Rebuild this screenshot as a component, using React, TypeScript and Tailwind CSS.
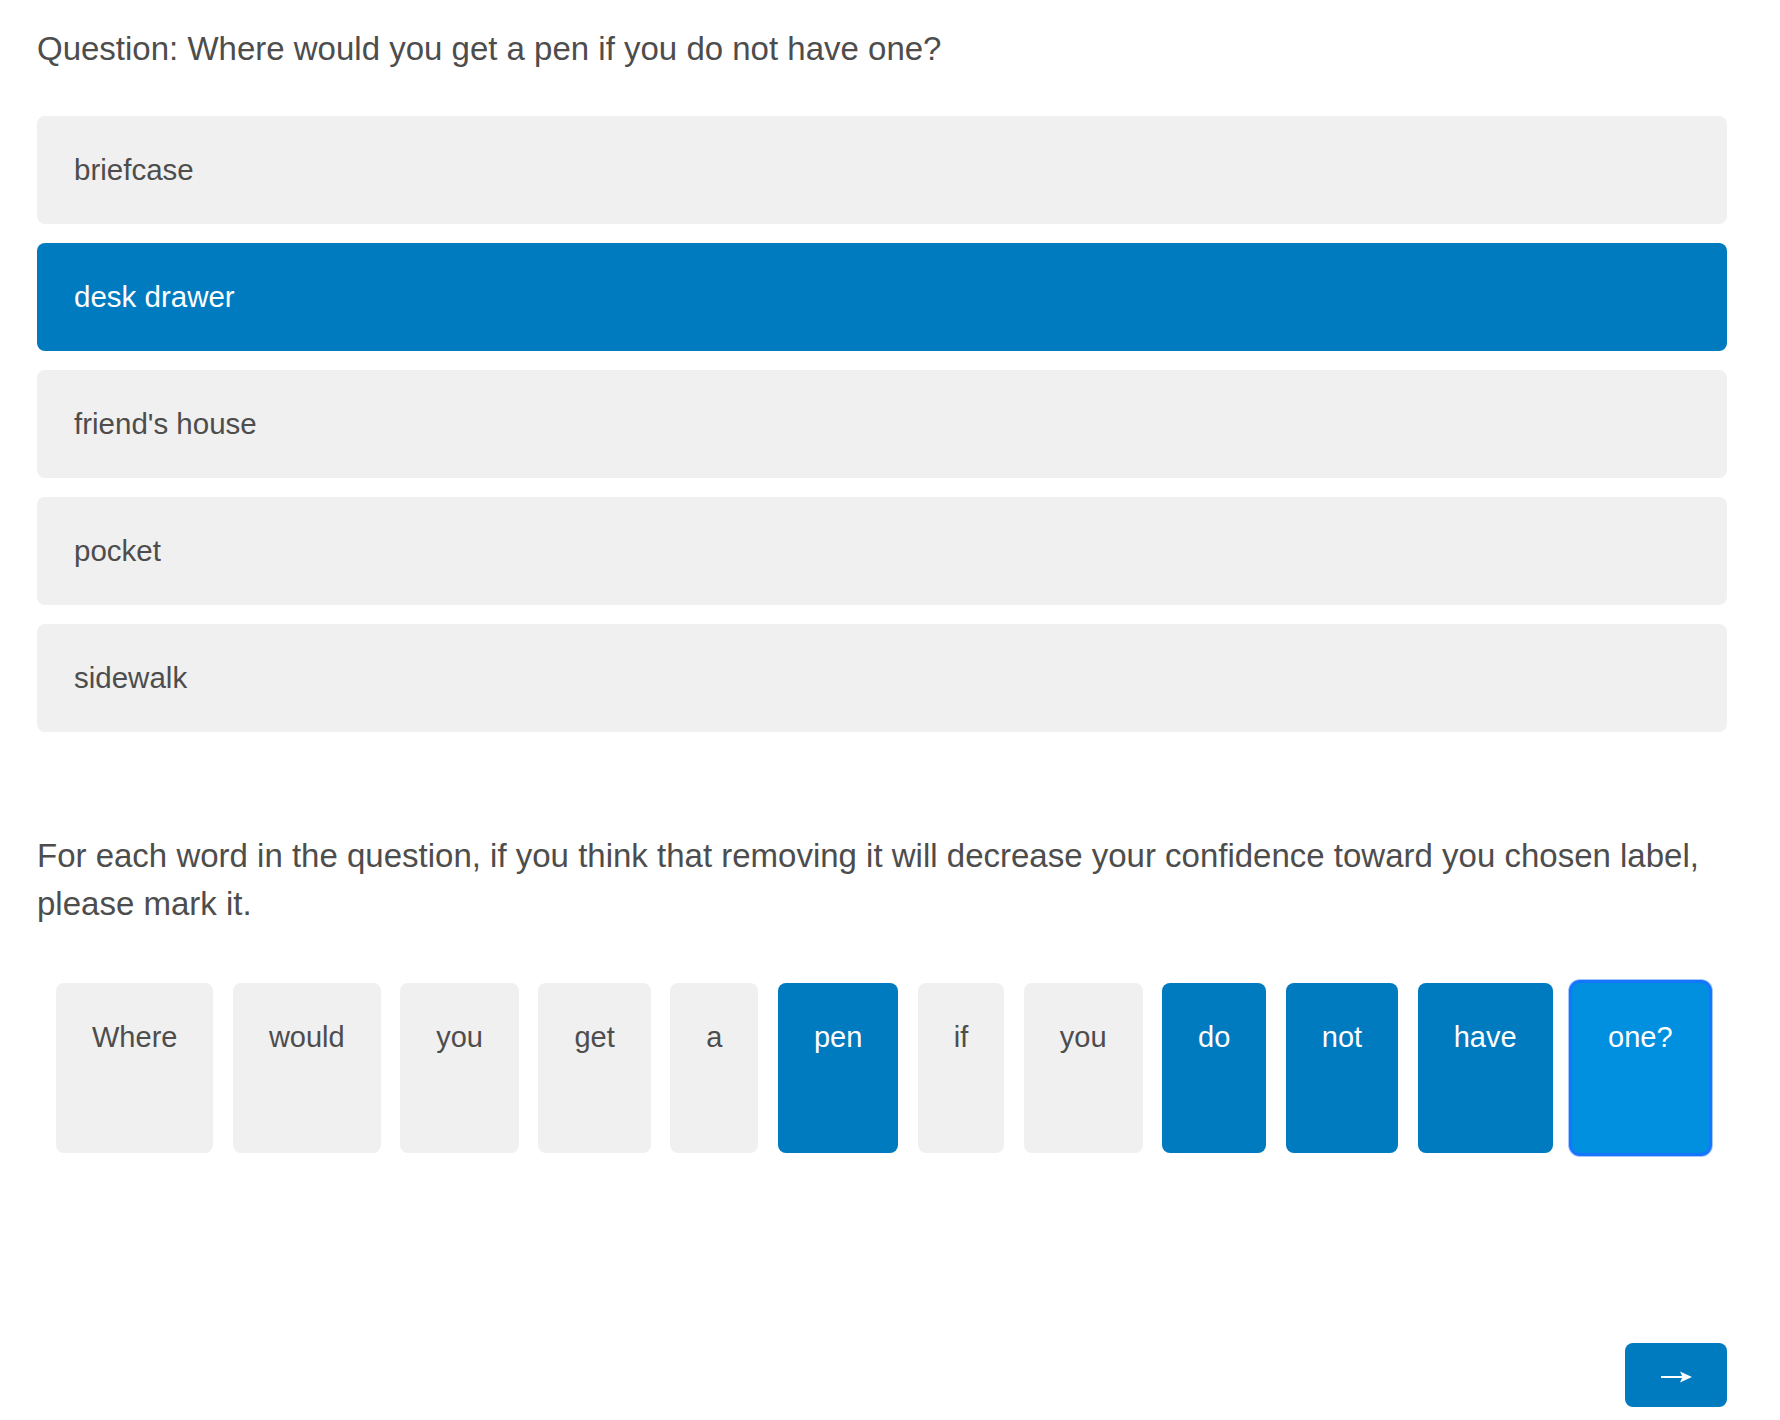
const options = ['briefcase', 'desk drawer', "friend's house", 'pocket', 'sidewalk']

const words = ['Where', 'would', 'you', 'get', 'a', 'pen', 'if', 'you', 'do', 'not', 'have', 'one?']
const marked = [5, 8, 9, 10, 11]
const focused = 11

function OptionBar({ label, selected }: { label: string, selected: boolean }) {
    return <div
        className={`flex items-center h-[108px] pl-[37px] rounded-[8px] text-[29.5px] ${selected
            ? 'bg-[#007bc0] text-white'
            : 'bg-[#f0f0f0] text-[#4d4d4d]'}`}
    >
        {label}
    </div>
}

function WordToken({ word, selected, focus }: { word: string, selected: boolean, focus: boolean }) {
    let tone = 'bg-[#f0f0f0] text-[#4d4d4d]'
    if (selected) tone = 'bg-[#007bc0] text-white'
    if (focus) tone = 'bg-[#0090df] text-white shadow-[0_0_0_3px_#1675ff,0_0_0_4px_#a3c7ff]'
    return <div className={`flex-none h-[170px] px-[36px] pt-[33px] rounded-[8px] text-[29px] leading-[42px] ${tone}`}>
        {word}
    </div>
}

export default function App() {
    return <div className="flex flex-col w-[1780px] h-[1420px] bg-white pl-[37px] pr-[53px] font-['Liberation_Sans',Arial,sans-serif] text-[#4d4d4d]">
        <p className="pt-[25px] text-[33px] leading-[48px]">
            Question: Where would you get a pen if you do not have one?
        </p>

        <div className="flex flex-col gap-[19px] mt-[43px]">
            {options.map((o, i) => <OptionBar key={o} label={o} selected={i === 1} />)}
        </div>

        <p className="mt-[100px] text-[33px] leading-[48px]">
            For each word in the question, if you think that removing it will decrease your confidence toward you chosen label, please mark it.
        </p>

        <div className="flex gap-[19.5px] mt-[55px] pl-[19px]">
            {words.map((w, i) => <WordToken
                key={i}
                word={w}
                selected={marked.includes(i)}
                focus={i === focused}
            />)}
        </div>

        <div className="flex justify-end mt-[190px]">
            <button className="flex items-center justify-center w-[102px] h-[64px] pt-[4px] rounded-[8px] bg-[#007bc0] text-white">
                <svg width="31" height="14" viewBox="0 0 31 14">
                    <line x1="0" y1="7" x2="26" y2="7" stroke="white" strokeWidth="2" />
                    <path d="M19 1.5 L31 7 L19 12.5 L21.5 7 Z" fill="white" />
                </svg>
            </button>
        </div>
    </div>
}
